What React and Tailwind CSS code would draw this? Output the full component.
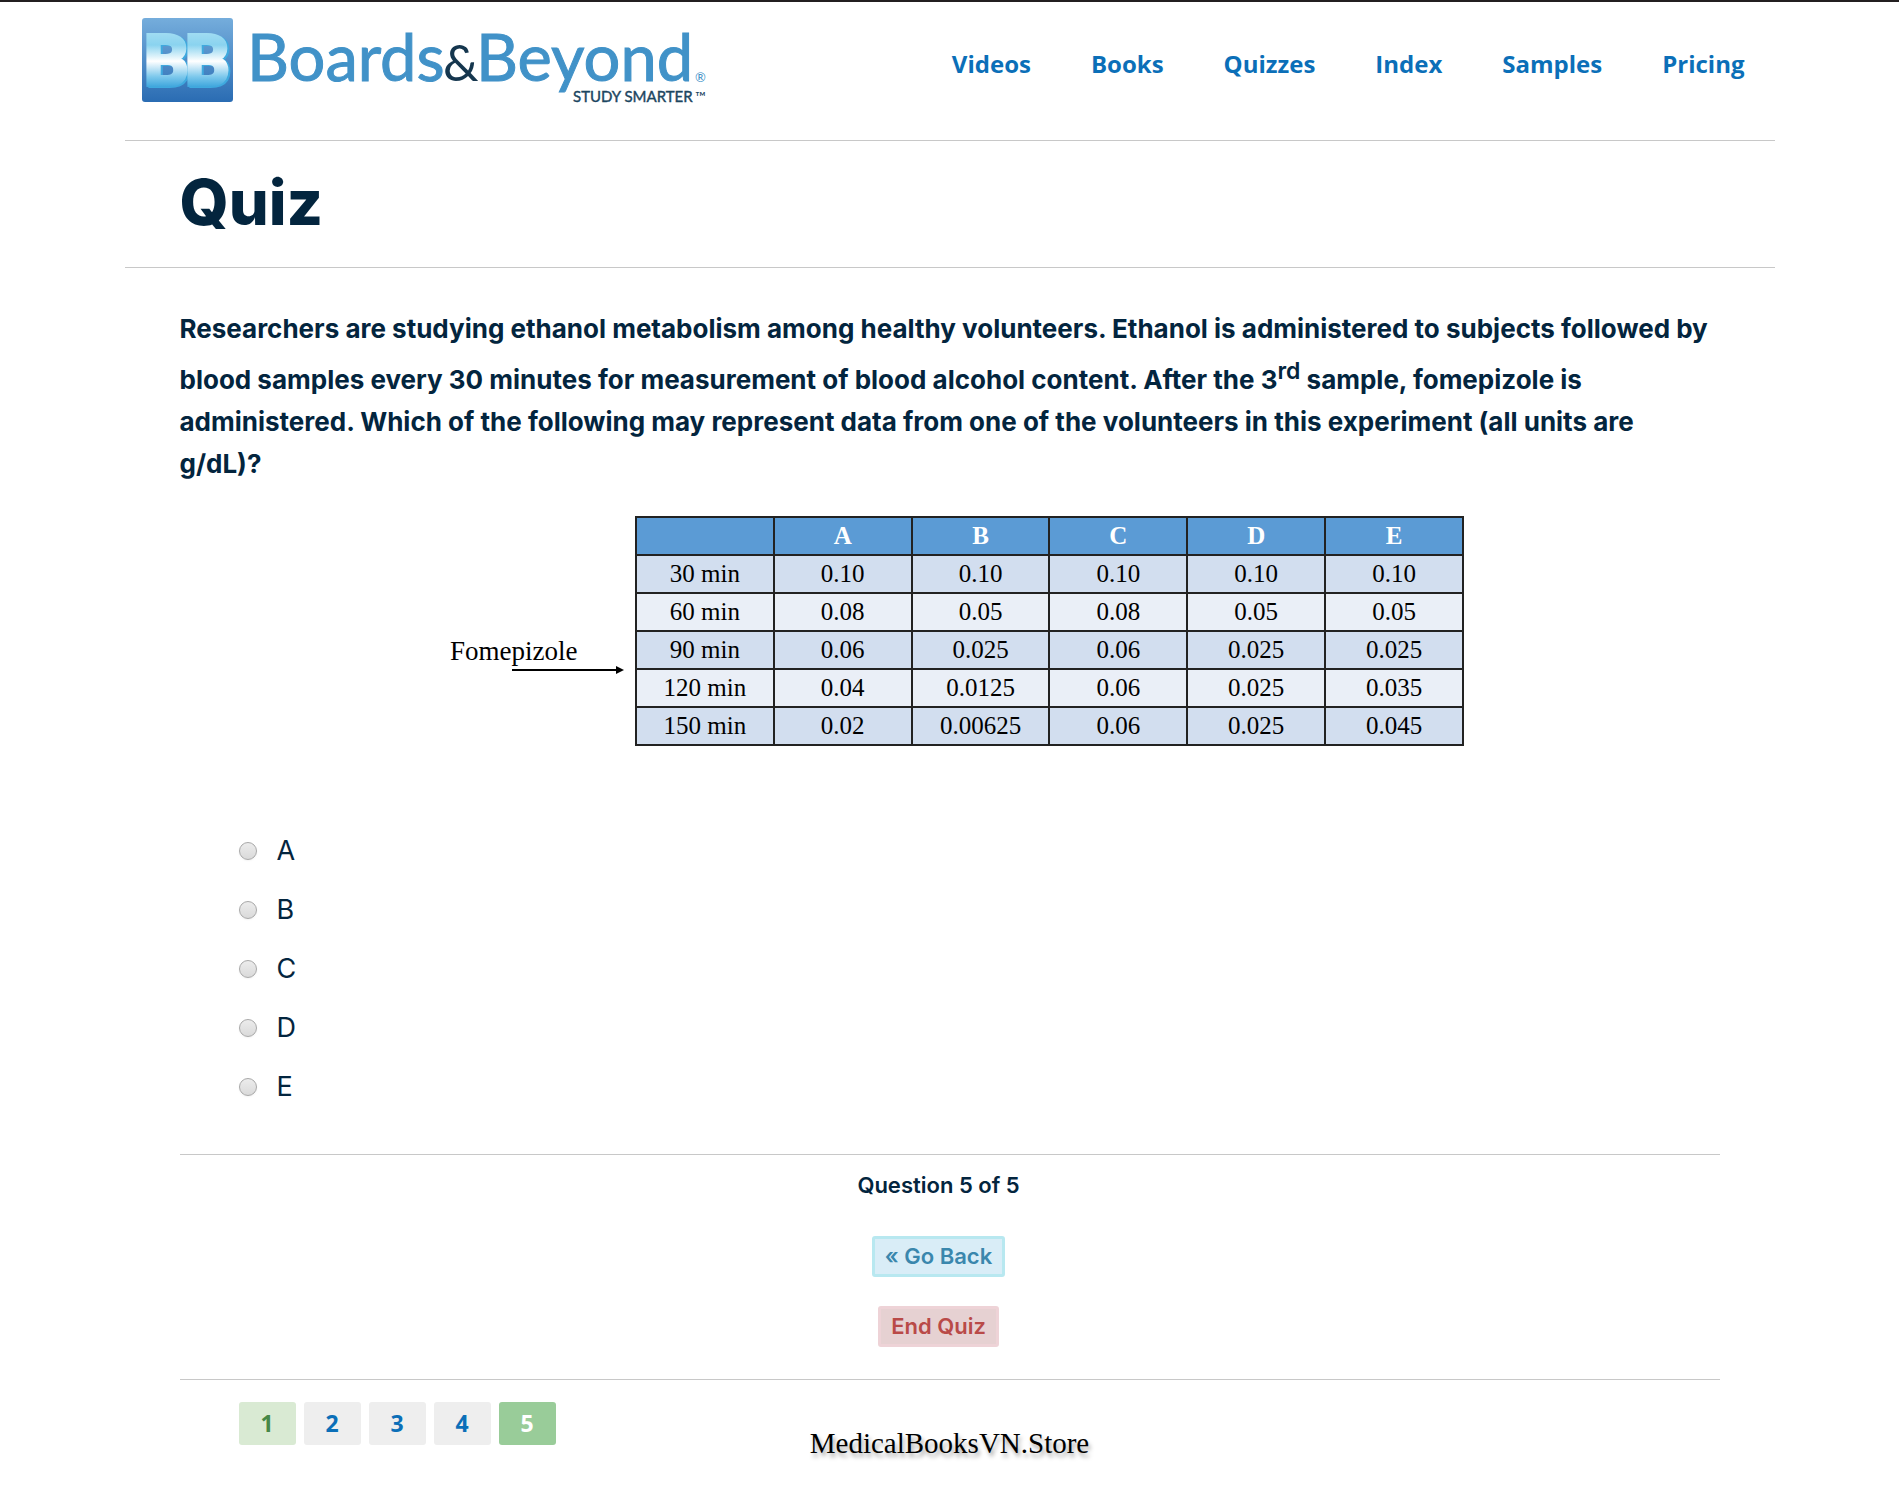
const navItems = ["Videos", "Books", "Quizzes", "Index", "Samples", "Pricing"];
const choices = ["A", "B", "C", "D", "E"];
const rows = [
  ["30 min", "0.10", "0.10", "0.10", "0.10", "0.10"],
  ["60 min", "0.08", "0.05", "0.08", "0.05", "0.05"],
  ["90 min", "0.06", "0.025", "0.06", "0.025", "0.025"],
  ["120 min", "0.04", "0.0125", "0.06", "0.025", "0.035"],
  ["150 min", "0.02", "0.00625", "0.06", "0.025", "0.045"],
];

function Logo() {
  return (
    <svg width="580" height="92" viewBox="0 0 580 92" role="img" aria-label="Boards & Beyond, Study Smarter">
      <defs>
        <linearGradient id="tile" x1="0" y1="0" x2="0" y2="1">
          <stop offset="0" stopColor="#75addc" />
          <stop offset="1" stopColor="#2a6cb3" />
        </linearGradient>
        <linearGradient id="ice" gradientUnits="userSpaceOnUse" x1="0" y1="12" x2="0" y2="72">
          <stop offset="0" stopColor="#a5def3" />
          <stop offset="0.25" stopColor="#8ad3ef" />
          <stop offset="0.52" stopColor="#ffffff" />
          <stop offset="0.78" stopColor="#7cc8ec" />
          <stop offset="1" stopColor="#2b9bd8" />
        </linearGradient>
      </defs>
      <rect x="0" y="0" width="91" height="84" rx="3" fill="url(#tile)" />
      <g className="drop-shadow-[2px_1px_0px_#3fa9de]" fontFamily="Roboto" fontWeight="700" fontSize="70" fill="url(#ice)" stroke="url(#ice)" strokeWidth="4">
        <text x="2" y="67">B</text>
        <text x="43" y="67">B</text>
      </g>
      <g fontFamily="Lato" fontSize="65" fill="#4192c8">
        <g stroke="#4192c8" strokeWidth="1">
          <text x="105" y="63">Boards</text>
          <text x="334" y="63">Beyond</text>
        </g>
        <text x="301" y="63" fontSize="50" fill="#15364e">&amp;</text>
        <text x="553" y="64" fontSize="13">®</text>
      </g>
      <g fontFamily="Lato" fill="#1c4661">
        <text x="431" y="84" fontSize="15" stroke="#1c4661" strokeWidth="0.4">STUDY SMARTER</text>
        <text x="553" y="84" fontSize="14">™</text>
      </g>
    </svg>
  );
}

export default function App() {
  return (
    <div className="border-t-2 border-[#231f20] bg-white font-['Inter',sans-serif] text-[#03253e]">
      <div className="mx-auto max-w-[1650px]">
        <header className="flex h-[138px] justify-between pt-4 pr-[30px] pl-[17px]">
          <a href="#home"><Logo /></a>
          <nav className="flex gap-[60px] pt-7 font-['Open_Sans',sans-serif] text-[24px] leading-[36px] font-bold text-[#0b6fb8]">
            {navItems.map((item) => (
              <a key={item} href={`#${item.toLowerCase()}`}>{item}</a>
            ))}
          </nav>
        </header>

        <h1 className="flex h-[128px] items-center border-y border-[#c8c8c8] px-[55px] pb-1 text-[63px] leading-[64px] font-extrabold">Quiz</h1>

        <main className="px-[55px]">
          <h2 className="pt-10 text-[26px] leading-[42px] font-bold">
            Researchers are studying ethanol metabolism among healthy volunteers. Ethanol is administered to subjects followed by blood samples every 30 minutes for measurement of blood alcohol content. After the 3<sup className="static align-super text-[23px] leading-[42px] font-semibold">rd</sup> sample, fomepizole is administered. Which of the following may represent data from one of the volunteers in this experiment (all units are g/dL)?
          </h2>

          <figure className="mt-[31px] flex justify-center pl-[15px] font-['Liberation_Serif',serif] text-black">
            <figcaption className="w-[185px] pt-[120px]">
              <div className="text-[27px] leading-[30px]">Fomepizole</div>
              <svg className="ml-[62px]" width="112" height="10" viewBox="0 0 112 10" aria-hidden="true">
                <path d="M0 4h105" stroke="#000" strokeWidth="2" />
                <path d="M104 0l8 4-8 4z" />
              </svg>
            </figcaption>
            <table className="w-[829px] table-fixed border-collapse text-center text-[25px] leading-[36px]">
              <thead>
                <tr className="bg-[#5b9bd5] text-white">
                  {["", ...choices].map((c) => (
                    <th key={c} scope="col" className="h-[38px] border-2 border-[#222] p-0 font-bold">{c}</th>
                  ))}
                </tr>
              </thead>
              <tbody>
                {rows.map((r) => (
                  <tr key={r[0]} className="odd:bg-[#d2deef] even:bg-[#eaeff7]">
                    {r.map((c, i) => (
                      <td key={i} className="h-[38px] border-2 border-[#222] p-0">{c}</td>
                    ))}
                  </tr>
                ))}
              </tbody>
            </table>
          </figure>

          <fieldset aria-label="Answer" className="mt-[84px] flex flex-col gap-[17px] pl-[59px]">
            {choices.map((c) => (
              <label key={c} className="flex h-[42px] items-center gap-5 text-[27px] leading-[42px]">
                <input type="radio" name="answer" value={c} className="size-[18px] appearance-none rounded-full border border-[#a8a8a8] bg-linear-to-b from-[#ececec] to-[#dadada] shadow-xs checked:bg-[#666]" />
                {c}
              </label>
            ))}
          </fieldset>

          <section className="mt-[46px] flex flex-col items-center border-y border-[#c8c8c8] pt-[14px] pr-[22px] pb-8 text-[22px] font-semibold">
            <p className="leading-[32px]">Question 5 of 5</p>
            <button type="button" className="mt-[35px] h-[41px] rounded-[3px] border-3 border-[#b8e8f0] bg-[#d9edf7] px-[10px] leading-[35px] text-[#3a87ad]">« Go Back</button>
            <button type="button" className="mt-[29px] h-[41px] rounded-[3px] border-3 border-[#eed3d7] bg-[#e6d1d2] px-[10px] leading-[35px] text-[#b94a48]">End Quiz</button>
          </section>

          <footer className="grid grid-cols-[1fr_auto_1fr] pt-[22px] pb-12">
            <nav aria-label="Questions" className="flex gap-2 pl-[59px] font-['Open_Sans',sans-serif] text-[23px] leading-[43px] font-bold text-[#0b6fb8]">
              <button type="button" className="h-[43px] w-[57px] rounded-[3px] bg-[#d9ead3] text-[#468847]">1</button>
              <button type="button" className="h-[43px] w-[57px] rounded-[3px] bg-[#eeeeee]">2</button>
              <button type="button" className="h-[43px] w-[57px] rounded-[3px] bg-[#eeeeee]">3</button>
              <button type="button" className="h-[43px] w-[57px] rounded-[3px] bg-[#eeeeee]">4</button>
              <button type="button" aria-current="true" className="h-[43px] w-[57px] rounded-[3px] bg-[#99cc99] text-white">5</button>
            </nav>
            <p className="pt-6 font-['Liberation_Serif',serif] text-[29px] leading-[34px] text-black [text-shadow:2px_4px_4px_rgba(0,0,0,0.35)]">MedicalBooksVN.Store</p>
          </footer>
        </main>
      </div>
    </div>
  );
}
